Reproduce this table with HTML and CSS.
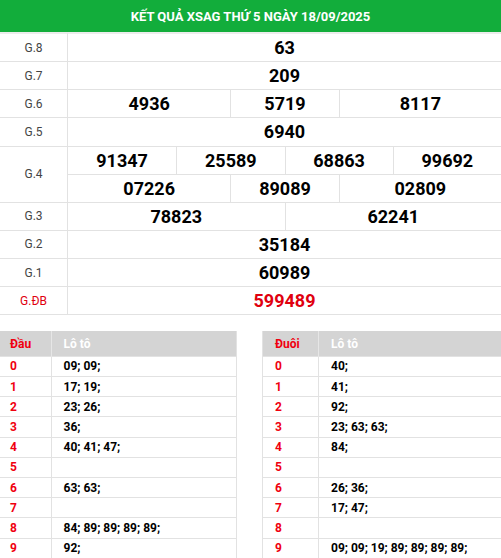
FILE: index.html
```html
<!DOCTYPE html>
<html lang="vi">
<head>
<meta charset="utf-8">
<link rel="stylesheet" href="styles.css">
</head>
<body>
<div class="page">
  <div class="title">KẾT QUẢ XSAG THỨ 5 NGÀY 18/09/2025</div>
  <div class="results">
    <div class="lbl">G.8</div><div class="nums"><div class="c8">63</div></div>
    <div class="lbl">G.7</div><div class="nums"><div class="c8">209</div></div>
    <div class="lbl">G.6</div><div class="nums"><div class="c3">4936</div><div class="c2">5719</div><div class="c3">8117</div></div>
    <div class="lbl">G.5</div><div class="nums"><div class="c8">6940</div></div>
    <div class="lbl">G.4</div>
    <div class="nums double">
      <div class="c2">91347</div><div class="c2">25589</div><div class="c2">68863</div><div class="c2">99692</div>
      <div class="c3 r2">07226</div><div class="c2 r2">89089</div><div class="c3 r2">02809</div>
    </div>
    <div class="lbl">G.3</div><div class="nums"><div class="c4">78823</div><div class="c4">62241</div></div>
    <div class="lbl">G.2</div><div class="nums"><div class="c8">35184</div></div>
    <div class="lbl">G.1</div><div class="nums"><div class="c8">60989</div></div>
    <div class="lbl red">G.ĐB</div><div class="nums"><div class="c8 red">599489</div></div>
  </div>
  <div class="loto">
    <table class="lt left">
      <tr><th class="k">Đầu</th><th>Lô tô</th></tr>
      <tr><td class="k">0</td><td>09; 09;</td></tr>
      <tr><td class="k">1</td><td>17; 19;</td></tr>
      <tr><td class="k">2</td><td>23; 26;</td></tr>
      <tr><td class="k">3</td><td>36;</td></tr>
      <tr><td class="k">4</td><td>40; 41; 47;</td></tr>
      <tr><td class="k">5</td><td></td></tr>
      <tr><td class="k">6</td><td>63; 63;</td></tr>
      <tr><td class="k">7</td><td></td></tr>
      <tr><td class="k">8</td><td>84; 89; 89; 89; 89;</td></tr>
      <tr><td class="k">9</td><td>92;</td></tr>
    </table>
    <table class="lt right">
      <tr><th class="k">Đuôi</th><th>Lô tô</th></tr>
      <tr><td class="k">0</td><td>40;</td></tr>
      <tr><td class="k">1</td><td>41;</td></tr>
      <tr><td class="k">2</td><td>92;</td></tr>
      <tr><td class="k">3</td><td>23; 63; 63;</td></tr>
      <tr><td class="k">4</td><td>84;</td></tr>
      <tr><td class="k">5</td><td></td></tr>
      <tr><td class="k">6</td><td>26; 36;</td></tr>
      <tr><td class="k">7</td><td>17; 47;</td></tr>
      <tr><td class="k">8</td><td></td></tr>
      <tr><td class="k">9</td><td>09; 09; 19; 89; 89; 89; 89;</td></tr>
    </table>
  </div>
</div>
</body>
</html>
```

FILE: styles.css
```css
* { box-sizing: border-box; }
html, body { margin: 0; padding: 0; background: #fff; }
body { font-family: Roboto, "Liberation Sans", Arial, sans-serif; color: #000; }
.page { width: 501px; overflow: hidden; height: 558px; }
.title {
  height: 32px;
  background: #12ad3b;
  color: #fff;
  font-weight: bold;
  font-size: 13px;
  line-height: 33px;
  text-align: center;
}
.results {
  display: grid;
  grid-template-columns: 68px 433px;
  border-bottom: 1px solid #e2e2e2;
}
.lbl {
  border-right: 1px solid #e2e2e2;
  border-top: 1px solid #e2e2e2;
  font-size: 12px;
  color: #444;
  display: flex;
  align-items: center;
  justify-content: center;
  height: 28.2px;
}
.results > .lbl:first-child { border-top: 2px solid #ececec; height: 29px; }
.results > .lbl:first-child + .nums { border-top: 2px solid #ececec; height: 29px; }
.nums {
  display: grid;
  grid-template-columns: repeat(8, 1fr);
  border-top: 1px solid #e2e2e2;
  height: 28.2px;
}
.nums.double { height: 56px; grid-template-rows: 27.6px 28.4px; }
.lbl:has(+ .double) { height: 56px; }
.nums > div {
  display: flex;
  align-items: center;
  justify-content: center;
  font-weight: bold;
  font-size: 18px;
  border-left: 1px solid #e2e2e2;
}
.nums > div:first-child, .nums > .r2:nth-child(5) { border-left: none; }
.r2 { border-top: 1px solid #e2e2e2; }
.c8 { grid-column: span 8; }
.c4 { grid-column: span 4; }
.c3 { grid-column: span 3; }
.c2 { grid-column: span 2; }
.red { color: #e0000f !important; }
.loto {
  display: flex;
  margin-top: 16px;
  gap: 25px;
}
.lt {
  border-collapse: collapse;
  font-size: 12px;
  font-weight: bold;
}
.lt.left { width: 237px; flex: none; }
.lt.right { width: 260px; flex: none; }
.lt th {
  background: #d4d4d4;
  color: #fff;
  height: 25px;
  text-align: left;
  padding: 0 10px 0 12px;
  border-left: 1px solid #e6e6e6;
}
.lt th.k { color: #f0000f; padding-left: 10px; border-left: none; }
.lt td {
  height: 20.2px;
  padding: 0 10px 0 12px;
  border-top: 1px solid #e2e2e2;
  border-left: 1px solid #e2e2e2;
  color: #000;
}
.lt td.k { color: #f0000f; padding-left: 10px; border-left: none; }
.lt.left td.k, .lt.left th.k { width: 51px; }
.lt.right td.k, .lt.right th.k { width: 56px; padding-left: 12px; }
.lt.left tr td:last-child, .lt.left tr th:last-child { border-right: 1px solid #e2e2e2; }
.lt.right tr td:first-child, .lt.right tr th:first-child { border-left: 1px solid #e2e2e2; }
```
